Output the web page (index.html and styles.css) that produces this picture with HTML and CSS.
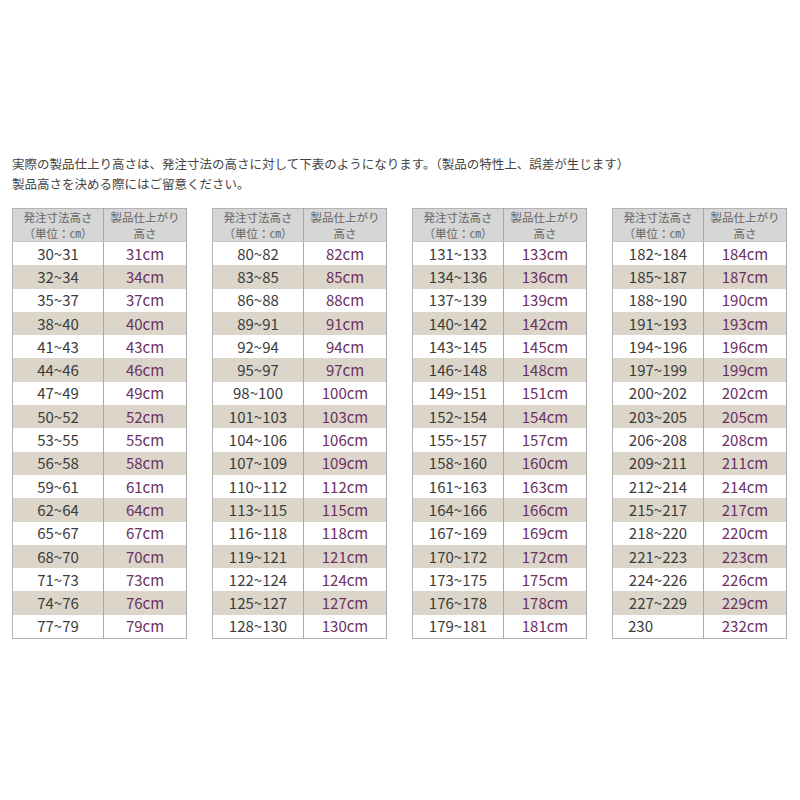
FILE: index.html
```html
<!DOCTYPE html>
<html lang="ja">
<head>
<meta charset="utf-8">
<link rel="stylesheet" href="styles.css">
</head>
<body>
<div class="page">
  <p class="intro">実際の製品仕上り高さは、発注寸法の高さに対して下表のようになります。（製品の特性上、誤差が生じます）<br>製品高さを決める際にはご留意ください。</p>
  <div class="tables" id="tables"></div>
</div>
<script>
  var groups = [
    [[30,31,31],[32,34,34],[35,37,37],[38,40,40],[41,43,43],[44,46,46],[47,49,49],[50,52,52],[53,55,55],[56,58,58],[59,61,61],[62,64,64],[65,67,67],[68,70,70],[71,73,73],[74,76,76],[77,79,79]],
    [[80,82,82],[83,85,85],[86,88,88],[89,91,91],[92,94,94],[95,97,97],[98,100,100],[101,103,103],[104,106,106],[107,109,109],[110,112,112],[113,115,115],[116,118,118],[119,121,121],[122,124,124],[125,127,127],[128,130,130]],
    [[131,133,133],[134,136,136],[137,139,139],[140,142,142],[143,145,145],[146,148,148],[149,151,151],[152,154,154],[155,157,157],[158,160,160],[161,163,163],[164,166,166],[167,169,169],[170,172,172],[173,175,175],[176,178,178],[179,181,181]],
    [[182,184,184],[185,187,187],[188,190,190],[191,193,193],[194,196,196],[197,199,199],[200,202,202],[203,205,205],[206,208,208],[209,211,211],[212,214,214],[215,217,217],[218,220,220],[221,223,223],[224,226,226],[227,229,229],[230,null,232]]
  ];
  var html = '';
  groups.forEach(function(g){
    html += '<table class="size"><colgroup><col class="c1"><col class="c2"></colgroup>' +
      '<thead><tr><th>発注寸法高さ<br>（単位：㎝）</th><th>製品仕上がり<br>高さ</th></tr></thead><tbody>';
    g.forEach(function(r){
      var a = r[1] === null ? '<td class="num left">' + r[0] + '</td>' : '<td class="num">' + r[0] + '~' + r[1] + '</td>';
      html += '<tr>' + a + '<td class="cm">' + r[2] + 'cm</td></tr>';
    });
    html += '</tbody></table>';
  });
  document.getElementById('tables').innerHTML = html;
</script>
</body>
</html>
```

FILE: styles.css
```css
html, body {
  margin: 0;
  padding: 0;
  background: #ffffff;
}
body {
  font-family: "Noto Sans CJK JP", "Noto Sans", sans-serif;
  color: #444;
}
.page {
  padding: 154px 12px 0 12px;
}
.intro {
  margin: 0;
  font-size: 12.5px;
  line-height: 20px;
  color: #444;
}
.tables {
  margin-top: 14px;
  display: flex;
  gap: 25px;
}
.size {
  width: 174px;
  flex: 0 0 174px;
  table-layout: fixed;
  border-collapse: collapse;
  border: 1px solid #b4b4b4;
}
.size col.c1 { width: 91px; }
.size col.c2 { width: 83px; }
.size th {
  height: 32px;
  padding: 0;
  background: #d6d6d6;
  color: #666;
  font-weight: normal;
  font-size: 11.5px;
  line-height: 16px;
  border-right: 1px solid #a8a8a8;
  border-bottom: 1px solid #c4c4c4;
  text-align: center;
  vertical-align: middle;
}
.size td {
  height: 23.3px;
  padding: 0;
  font-size: 15px;
  line-height: 18px;
  text-align: center;
  vertical-align: middle;
  border-right: 1px solid #a8a8a8;
}
.size tbody tr:nth-child(even) td {
  background: #dbd6c9;
}
.size td.num {
  color: #3c3c3c;
}
.size td.num.left {
  text-align: left;
  padding-left: 15px;
}
.size td.cm {
  color: #6c3064;
}
```
